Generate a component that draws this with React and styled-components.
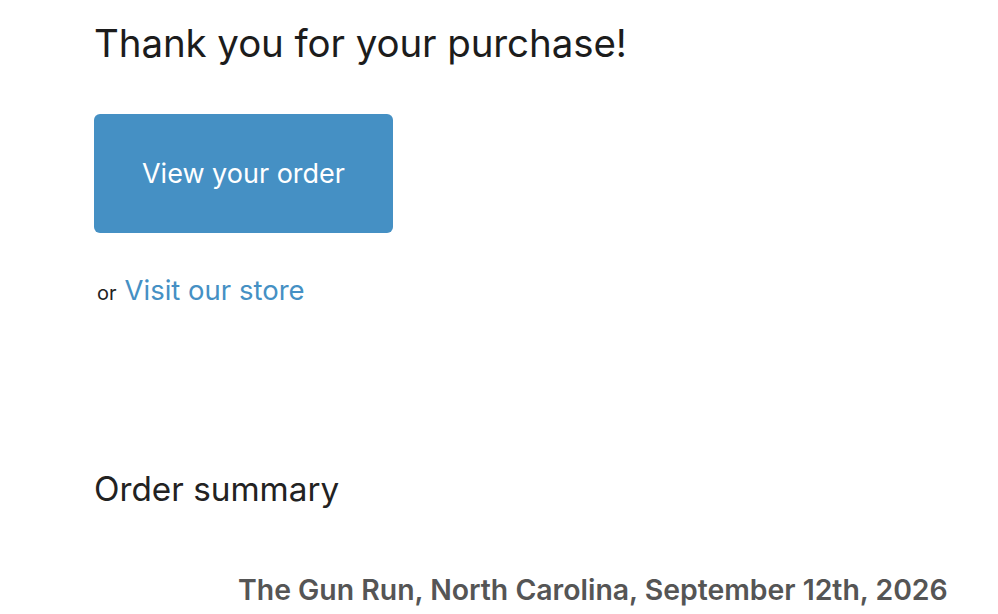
import React from "react";
import styled, {createGlobalStyle} from "styled-components";

const Global = createGlobalStyle`
  body {
    margin: 0;
    background: #fff;
    font-family: Inter, "Liberation Sans", sans-serif;
    color: #222;
  }
`

const Page = styled.div`
  width: 998px;
  height: 614px;
  overflow: hidden;
  padding-left: 94px;
  box-sizing: border-box;
`

const Heading = styled.h2`
  margin: 0;
  padding-top: 20px;
  font-size: 38.5px;
  font-weight: 400;
  line-height: 46px;
  letter-spacing: -0.1px;
  color: #1c1c1c;
`

const Actions = styled.div`
  margin-top: 48px;
`

const Button = styled.a`
  display: inline-flex;
  align-items: center;
  justify-content: center;
  width: 299px;
  height: 119px;
  border-radius: 6px;
  background: #4590c4;
  color: #fff;
  font-size: 27px;
  text-decoration: none;
`

const Secondary = styled.div`
  margin-top: 40px;
  padding-left: 3px;
  display: flex;
  align-items: baseline;
  gap: 8px;
  font-size: 20px;
  color: #222;
`

const StoreLink = styled.a`
  font-size: 27.5px;
  color: #4590c4;
  text-decoration: none;
`

const Section = styled.div`
  margin-top: 162px;
`

const SectionTitle = styled.h3`
  margin: 0;
  font-size: 33.3px;
  font-weight: 400;
  line-height: 40px;
  color: #222;
`

const Item = styled.div`
  margin-top: 64px;
  display: grid;
  grid-template-columns: 144px auto;
`

const Thumb = styled.div``

const ItemTitle = styled.div`
  font-size: 28.4px;
  font-weight: 600;
  line-height: 34px;
  color: #555;
`

export default function App() {
  return (
    <>
      <Global/>
      <Page>
        <Heading>Thank you for your purchase!</Heading>
        <Actions>
          <Button href="#">View your order</Button>
          <Secondary>
            or <StoreLink href="#">Visit our store</StoreLink>
          </Secondary>
        </Actions>
        <Section>
          <SectionTitle>Order summary</SectionTitle>
          <Item>
            <Thumb/>
            <ItemTitle>The Gun Run, North Carolina, September 12th, 2026</ItemTitle>
          </Item>
        </Section>
      </Page>
    </>
  );
}
